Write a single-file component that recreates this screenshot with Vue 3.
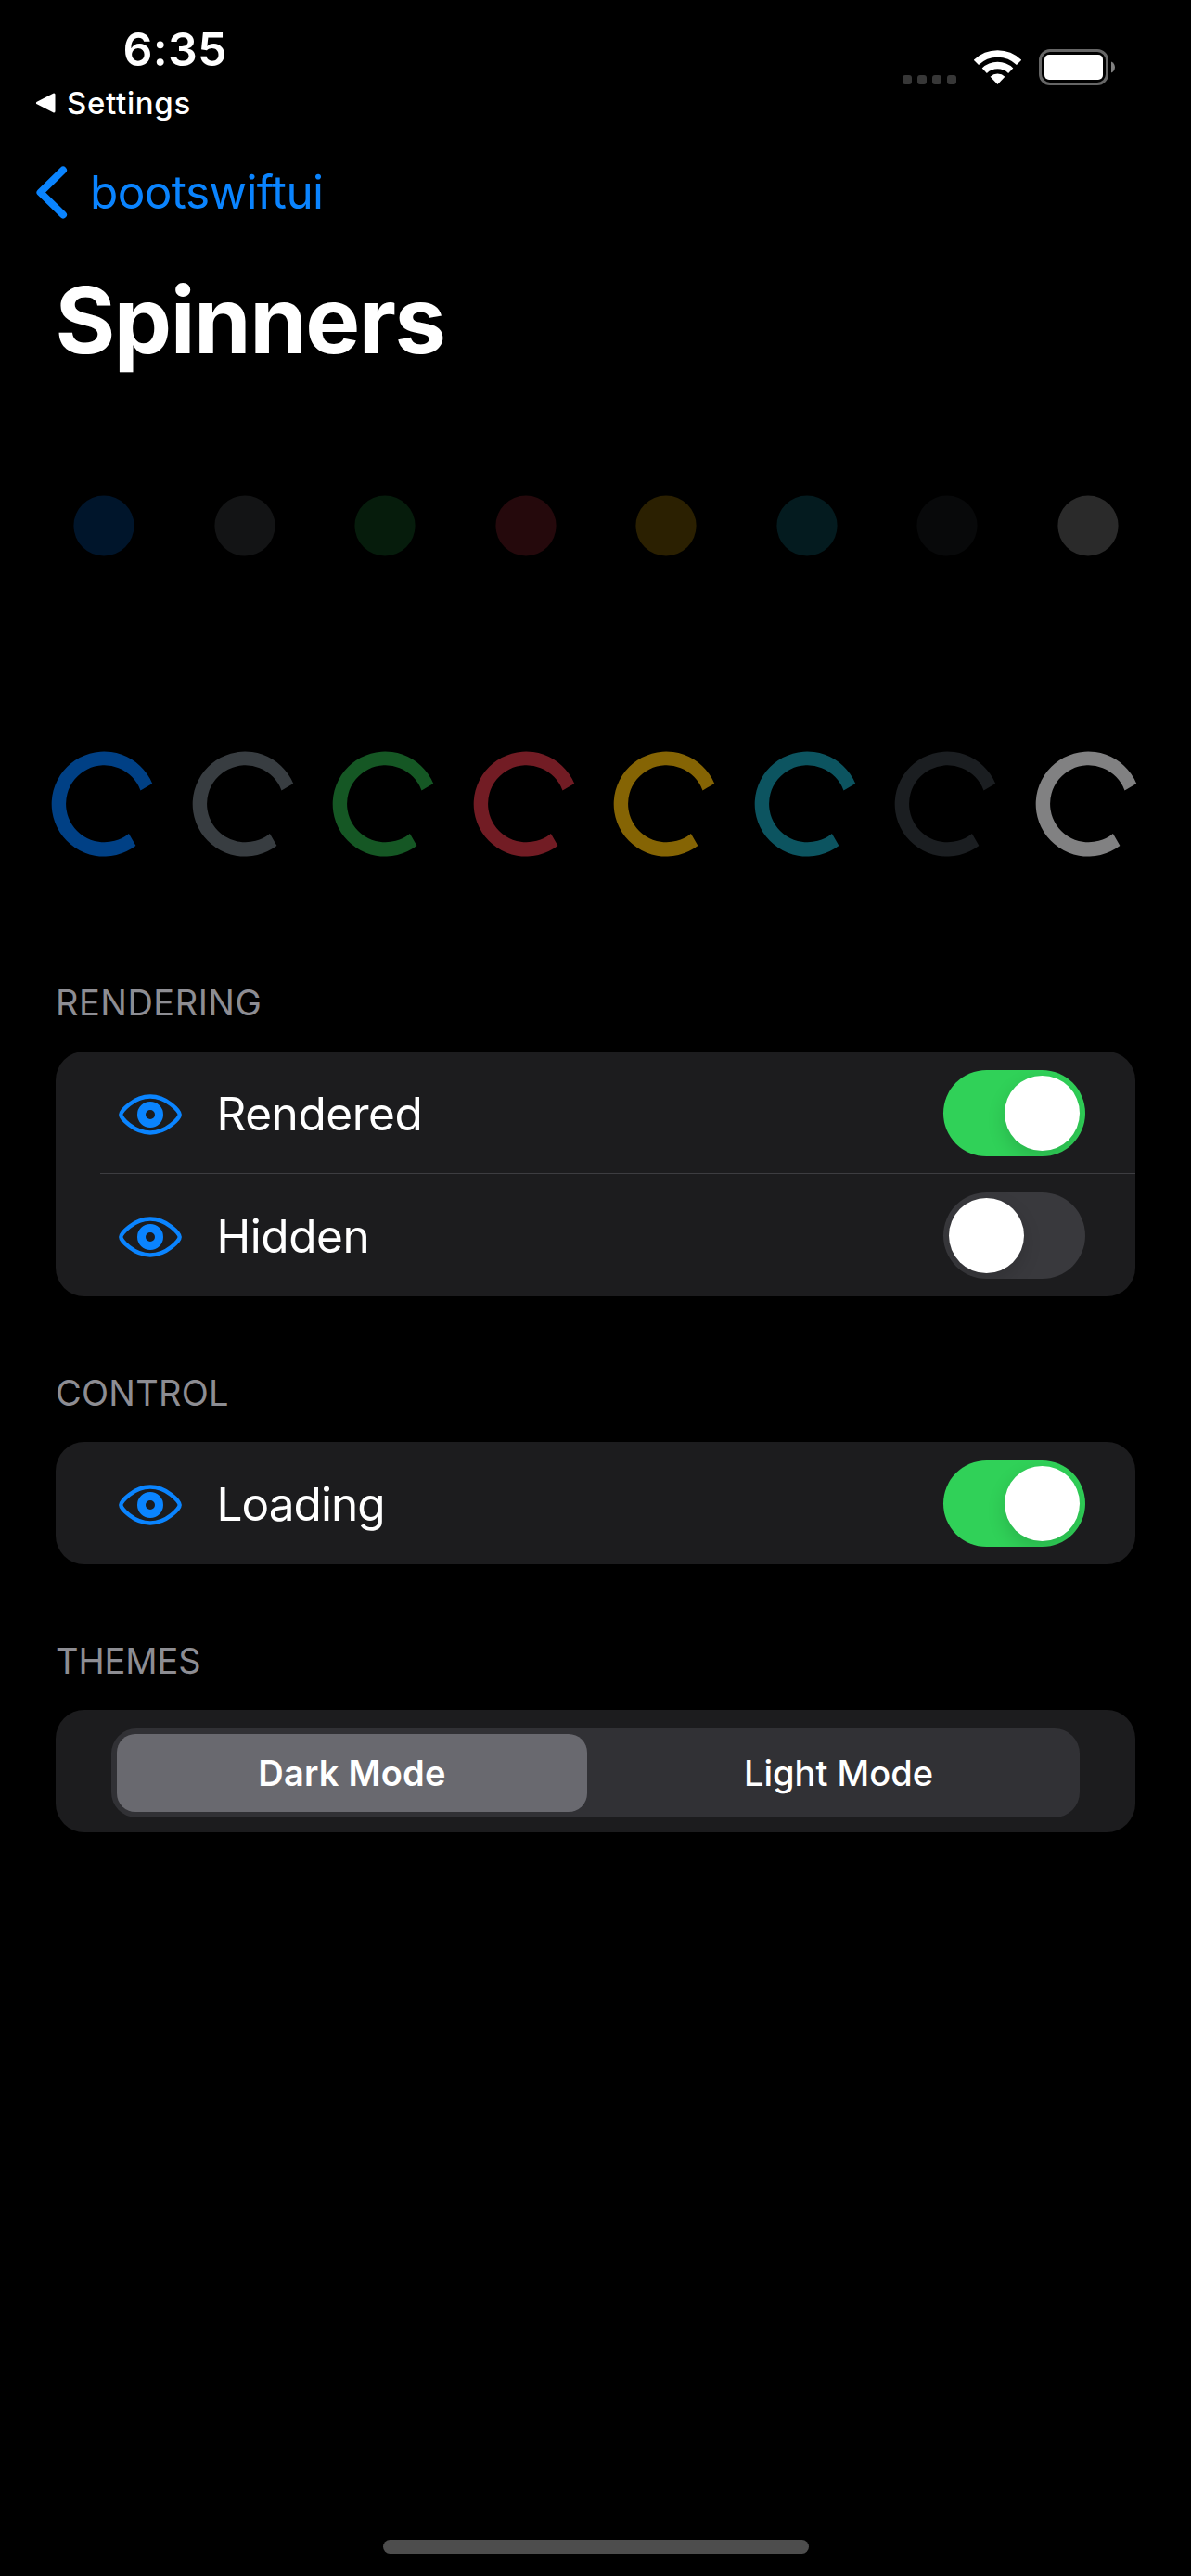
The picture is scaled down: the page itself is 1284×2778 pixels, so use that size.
<script setup>
const themes = [
  { name: 'primary', ring: '#004085', dot: '#00152b' },
  { name: 'secondary', ring: '#383d41', dot: '#131415' },
  { name: 'success', ring: '#155724', dot: '#061c0c' },
  { name: 'danger', ring: '#721c24', dot: '#25090c' },
  { name: 'warning', ring: '#856404', dot: '#2b2001' },
  { name: 'info', ring: '#0c5460', dot: '#041b1f' },
  { name: 'dark', ring: '#1b1e21', dot: '#08090a' },
  { name: 'light', ring: '#818182', dot: '#2a2a2a' },
]
const sections = [
  {
    title: 'Rendering',
    rows: [
      { label: 'Rendered', on: true },
      { label: 'Hidden', on: false },
    ],
  },
  { title: 'Control', rows: [{ label: 'Loading', on: true }] },
]
</script>

<template>
  <main class="screen">
    <header class="status">
      <div class="left">
        <span class="time">6:35</span>
        <span class="return">
          <svg width="22" height="22" viewBox="0 0 22 22"><path d="M20 2v18L2.500 11z" fill="#fff" stroke="#fff" stroke-width="3" stroke-linejoin="round" /></svg>
          <span>Settings</span>
        </span>
      </div>
      <div class="indicators">
        <div class="cell"><i v-for="n in 4" :key="n" /></div>
        <svg class="wifi" width="51" height="38" viewBox="0 0 51 38">
          <g fill="none" stroke="#fff" stroke-width="7.5">
            <path d="M2.400 13.400a33 33 0 0 1 46.200 0" />
            <path d="M11.300 22.300a20.600 20.600 0 0 1 28.400 0" />
          </g>
          <path d="M25.500 37l-7.900-8.300a11.600 11.600 0 0 1 15.800 0z" fill="#fff" />
        </svg>
        <svg class="battery" width="82" height="39" viewBox="0 0 82 39">
          <rect x="1.5" y="1.5" width="72" height="36" rx="10.5" fill="none" stroke="#666" stroke-width="3" />
          <rect x="6" y="6" width="63" height="27" rx="5" fill="#fff" />
          <path d="M78 13.500c5.300 2 5.300 10 0 12z" fill="#808080" />
        </svg>
      </div>
    </header>

    <nav class="nav">
      <svg width="34" height="57" viewBox="0 0 34 57"><path d="M29 4.500L4.500 28.500L29 52.500" fill="none" stroke="#0a84ff" stroke-width="8" stroke-linecap="round" stroke-linejoin="round" /></svg>
      <span>bootswiftui</span>
    </nav>
    <h1>Spinners</h1>

    <div class="spinners dots">
      <svg v-for="t in themes" :key="t.name" width="66" height="66" viewBox="0 0 66 66">
        <circle cx="33" cy="33" r="32.6" :fill="t.dot" />
      </svg>
    </div>
    <div class="spinners rings">
      <svg v-for="t in themes" :key="t.name" width="114" height="114" viewBox="-57 -57 114 114">
        <path d="M52.200-22A56.500 56.500 0 1 0 34.400 45L26.900 31.900A41.500 41.500 0 1 1 39.500-14.600Z" :fill="t.ring" />
      </svg>
    </div>

    <section v-for="s in sections" :key="s.title">
      <h2 :class="s.title.toLowerCase()">{{ s.title.toUpperCase() }}</h2>
      <div class="card">
        <div v-for="r in s.rows" :key="r.label" class="row">
          <svg class="eye" width="68" height="44" viewBox="0 0 68 44">
            <path d="M2.300 22C2.300 18.500 16 2.500 34 2.500S65.700 18.500 65.700 22S52 41.500 34 41.500S2.300 25.500 2.300 22Z" fill="none" stroke="#0a84ff" stroke-width="4.400" />
            <circle cx="34" cy="22" r="9.500" fill="none" stroke="#0a84ff" stroke-width="9" />
          </svg>
          <span class="label" :class="r.label.toLowerCase()">{{ r.label }}</span>
          <span class="switch" :class="{ on: r.on }"><i /></span>
        </div>
      </div>
    </section>

    <section>
      <h2 class="themes">THEMES</h2>
      <div class="card picker">
        <div class="segments">
          <span class="selected">Dark Mode</span>
          <span>Light Mode</span>
        </div>
      </div>
    </section>

    <div class="home" />
  </main>
</template>

<style>
body { background: #000; }
</style>

<style scoped>
.screen { box-sizing: border-box; width: 1284px; height: 2778px; display: flex; flex-direction: column; background: #000; color: #fff; font-family: Inter, "Liberation Sans", sans-serif; overflow: hidden; }
svg { display: block; flex: none; }

.status { height: 141px; display: flex; justify-content: space-between; padding: 0 82px 0 38px; }
.left { display: flex; flex-direction: column; }
.time { margin: 23px 0 0 94.5px; font-size: 50px; font-weight: 600; line-height: 60px; letter-spacing: 0.25px; }
.return { display: flex; align-items: center; gap: 12px; margin-top: 8px; font-size: 33px; font-weight: 500; line-height: 40px; letter-spacing: 0.66px; }
.indicators { display: flex; align-items: flex-start; }
.cell { display: flex; gap: 6px; margin: 81px 19px 0 0; }
.cell i { width: 10px; height: 10px; border-radius: 3px; background: #373737; }
.wifi { margin: 54px 19px 0 0; }
.battery { margin-top: 53px; }

.nav { display: flex; align-items: center; gap: 24px; height: 132px; padding-left: 39px; color: #0a84ff; font-size: 49.5px; letter-spacing: -0.6px; }
h1 { margin: 12px 0 0 59.5px; font-size: 99px; line-height: 120px; font-weight: 700; letter-spacing: -1.5px; }

.spinners { display: grid; grid-template-columns: repeat(8, 151.5px); justify-content: center; justify-items: center; padding-left: 1px; }
.dots { margin-top: 129px; }
.rings { margin-top: 210px; }

section { margin: 81px 60px 0; }
.rings + section { margin-top: 134px; }
h2 { margin: 0; font-size: 38px; line-height: 46px; font-weight: 400; color: #8d8d93; }
.rendering { letter-spacing: 0.5px; }
.control { letter-spacing: 0.25px; }
.themes { letter-spacing: -0.1px; }
.card { margin-top: 30px; background: #1c1c1e; border-radius: 31px; }
.row { position: relative; display: flex; align-items: center; height: 132px; box-sizing: border-box; padding: 0 54px 0 68px; font-size: 49.5px; }
.row + .row::before { content: ""; position: absolute; top: -1px; left: 48px; right: 0; height: 1px; background: #3d3d41; }
.eye { margin-top: 4px; }
.label { flex: 1; margin: 2px 0 0 37.5px; letter-spacing: -0.45px; }
.loading { letter-spacing: -0.95px; }
.switch { width: 153px; height: 93px; margin-top: 1px; box-sizing: border-box; padding: 6px; border-radius: 47px; background: #39393d; overflow: hidden; }
.switch i { display: block; width: 81px; height: 81px; border-radius: 50%; background: #fff; box-shadow: 0 8px 20px rgba(0, 0, 0, 0.14); }
.on { background: #30d158; }
.on i { margin-left: 60px; }

.picker { padding: 20px 60px 16px; }
.segments { display: grid; grid-template-columns: 507px 508px; justify-content: space-between; height: 96px; box-sizing: border-box; padding: 6px; background: #313135; border-radius: 27px; font-size: 38px; font-weight: 500; line-height: 84px; text-align: center; }
.selected { background: #69696f; border-radius: 20px; font-weight: 600; letter-spacing: 0.2px; }

.home { width: 459px; height: 15px; margin: auto auto 24px; background: #4d4d4d; border-radius: 8px; }
</style>
